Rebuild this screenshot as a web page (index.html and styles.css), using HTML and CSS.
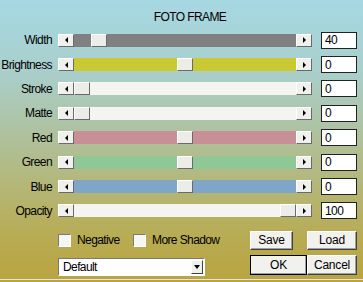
FILE: index.html
```html
<!DOCTYPE html>
<html lang="en">
<head>
    <meta charset="UTF-8">
    <title>Foto Frame</title>
    <link rel="stylesheet" href="styles.css">
</head>
<body>
    <div class="dialog">
        <h1 class="title">FOTO FRAME</h1>
        <div class="rows">
            <div class="row">
                <span class="name">Width</span>
                <div class="slider"><span class="arrow left"></span><div class="track gray"><span class="thumb" style="margin-left:17px"></span></div><span class="arrow right"></span></div>
                <input class="value" value="40">
            </div>
            <div class="row">
                <span class="name">Brightness</span>
                <div class="slider"><span class="arrow left"></span><div class="track yellow"><span class="thumb" style="margin-left:103px"></span></div><span class="arrow right"></span></div>
                <input class="value" value="0">
            </div>
            <div class="row">
                <span class="name">Stroke</span>
                <div class="slider"><span class="arrow left"></span><div class="track white"><span class="thumb" style="margin-left:0px"></span></div><span class="arrow right"></span></div>
                <input class="value" value="0">
            </div>
            <div class="row">
                <span class="name">Matte</span>
                <div class="slider"><span class="arrow left"></span><div class="track white"><span class="thumb" style="margin-left:0px"></span></div><span class="arrow right"></span></div>
                <input class="value" value="0">
            </div>
            <div class="row">
                <span class="name">Red</span>
                <div class="slider"><span class="arrow left"></span><div class="track red"><span class="thumb" style="margin-left:103px"></span></div><span class="arrow right"></span></div>
                <input class="value" value="0">
            </div>
            <div class="row">
                <span class="name">Green</span>
                <div class="slider"><span class="arrow left"></span><div class="track green"><span class="thumb" style="margin-left:103px"></span></div><span class="arrow right"></span></div>
                <input class="value" value="0">
            </div>
            <div class="row">
                <span class="name">Blue</span>
                <div class="slider"><span class="arrow left"></span><div class="track blue"><span class="thumb" style="margin-left:103px"></span></div><span class="arrow right"></span></div>
                <input class="value" value="0">
            </div>
            <div class="row">
                <span class="name">Opacity</span>
                <div class="slider"><span class="arrow left"></span><div class="track white"><span class="thumb" style="margin-left:206px"></span></div><span class="arrow right"></span></div>
                <input class="value" value="100">
            </div>
        </div>
        <div class="bottom">
            <div class="checks">
                <label class="check first"><span class="box"></span>Negative</label>
                <label class="check"><span class="box"></span>More Shadow</label>
            </div>
            <button class="btn save">Save</button>
            <button class="btn">Load</button>
            <div class="select"><span>Default</span><span class="drop"></span></div>
            <button class="btn ok">OK</button>
            <button class="btn">Cancel</button>
        </div>
    </div>
</body>
</html>
```

FILE: styles.css
```css
* {
    margin: 0;
    padding: 0;
    box-sizing: border-box;
}

body {
    font-family: 'Liberation Sans', Arial, sans-serif;
    font-size: 12px;
    letter-spacing: -0.6px;
    color: #000;
    height: 282px;
    overflow: hidden;
    background: linear-gradient(to bottom, #a6d8e3 0%, #a9cfcc 25%, #aec3a4 45%, #b4b77a 65%, #b8ab52 85%, #b9a43f 100%);
}

.dialog {
    height: 280px;
    padding-top: 10px;
    border-bottom: 1px solid #e6e4d6;
}

.title {
    font-size: 12px;
    font-weight: normal;
    line-height: 14px;
    height: 18px;
    text-align: center;
    padding-left: 17px;
}

.row {
    display: flex;
    align-items: center;
    height: 24.4px;
}

.name {
    width: 52px;
    margin-right: 6px;
    text-align: right;
}

.slider {
    display: flex;
    width: 254px;
    height: 13px;
}

.arrow,
.thumb {
    width: 16px;
    height: 13px;
    background: #f0f0ec;
    border: 1px solid;
    border-color: #fff #6a6a6a #6a6a6a #fff;
}

.arrow {
    display: flex;
    align-items: center;
    justify-content: center;
}

.arrow::before {
    content: '';
    border-style: solid;
    border-color: transparent;
}

.arrow.left::before {
    border-width: 3px 3px 3px 0;
    border-right-color: #000;
}

.arrow.right::before {
    border-width: 3px 0 3px 3px;
    border-left-color: #000;
}

.track {
    flex: 1;
    display: flex;
}

.thumb {
    background: #ecece8;
}

.gray { background: #808080; }
.yellow { background: #cbc933; }
.white { background: #f4f4f1; }
.red { background: #c98f97; }
.green { background: #90c797; }
.blue { background: #7fa6c8; }

.value {
    margin-left: 9px;
    width: 36px;
    height: 17px;
    padding-left: 3px;
    border: 1px solid #222;
    background: #fff;
    font: inherit;
    letter-spacing: inherit;
    color: #000;
}

.bottom {
    display: grid;
    grid-template-columns: 192px 57px 50px;
    grid-template-rows: 20px 23px;
    row-gap: 3px;
    align-items: center;
    padding: 7px 0 0 58px;
}

.checks {
    display: flex;
    align-items: center;
}

.check {
    display: flex;
    align-items: center;
    gap: 6px;
}

.check.first {
    width: 75px;
}

.box {
    width: 13px;
    height: 13px;
    background: #f6f6f2;
    border: 1px solid;
    border-color: #7a7a7a #fff #fff #7a7a7a;
}

.btn {
    height: 19px;
    background: #f1f1ed;
    border: 1px solid;
    border-color: #fff #404040 #404040 #fff;
    box-shadow: inset -1px -1px #a0a0a0;
    font: inherit;
    letter-spacing: -0.2px;
    color: #000;
}

.save {
    width: 43px;
}

.ok {
    height: 20px;
    outline: 1px solid #000;
    outline-offset: -1px;
}

.bottom .btn:nth-last-child(1) {
    height: 20px;
}

.select {
    align-self: end;
    width: 147px;
    height: 18px;
    display: flex;
    align-items: center;
    justify-content: space-between;
    padding: 0 1px 0 4px;
    background: #fff;
    border: 1px solid;
    border-color: #7a7a7a #fff #fff #7a7a7a;
}

.drop {
    width: 12px;
    height: 14px;
    display: flex;
    align-items: center;
    justify-content: center;
    background: #f0f0ec;
    border: 1px solid;
    border-color: #fff #404040 #404040 #fff;
}

.drop::before {
    content: '';
    border-style: solid;
    border-width: 4px 3.5px 0 3.5px;
    border-color: #000 transparent transparent transparent;
}
```
